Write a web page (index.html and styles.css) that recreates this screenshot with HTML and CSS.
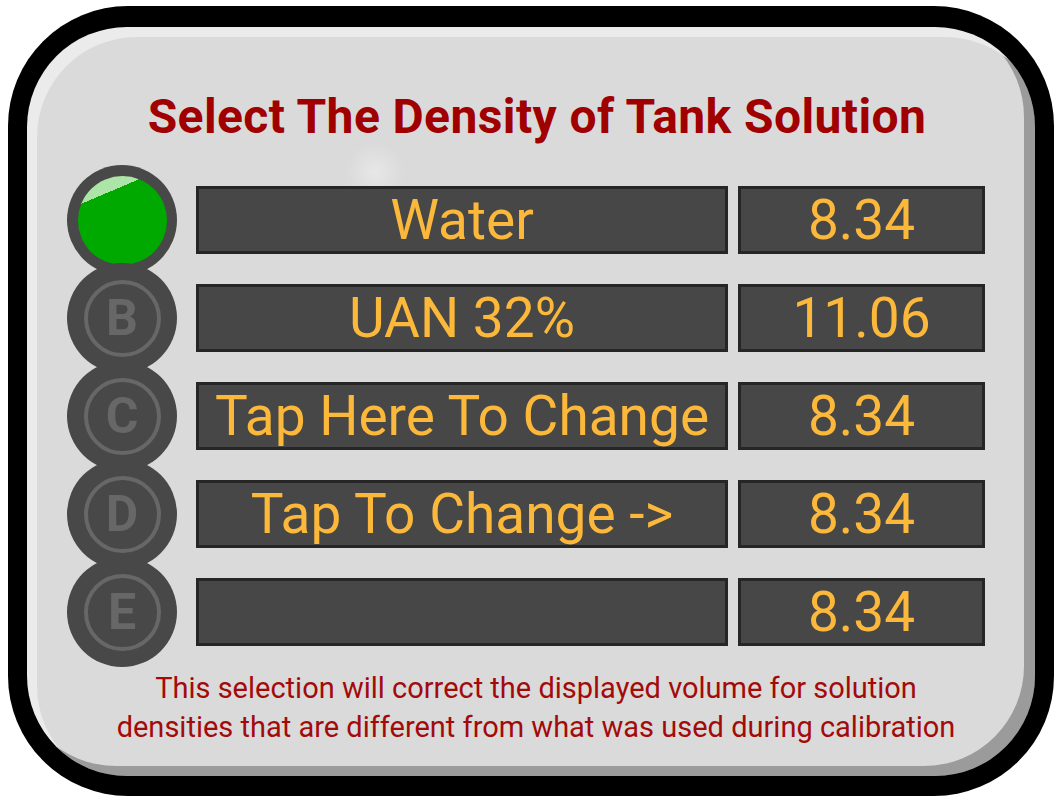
FILE: index.html
```html
<!DOCTYPE html>
<html>
<head>
<meta charset="utf-8">
<link rel="stylesheet" href="styles.css">
</head>
<body>
<div class="frame">
  <div class="panel">
    <h1 class="title">Select The Density of Tank Solution</h1>
    <div class="rows">
      <div class="row">
        <div class="dot"><div class="lamp"></div></div>
        <div class="box name">Water</div>
        <div class="box value">8.34</div>
      </div>
      <div class="row">
        <div class="dot"><div class="ring">B</div></div>
        <div class="box name">UAN 32%</div>
        <div class="box value">11.06</div>
      </div>
      <div class="row">
        <div class="dot"><div class="ring">C</div></div>
        <div class="box name">Tap Here To Change</div>
        <div class="box value">8.34</div>
      </div>
      <div class="row">
        <div class="dot"><div class="ring">D</div></div>
        <div class="box name">Tap To Change -&gt;</div>
        <div class="box value">8.34</div>
      </div>
      <div class="row">
        <div class="dot"><div class="ring">E</div></div>
        <div class="box name"></div>
        <div class="box value">8.34</div>
      </div>
    </div>
    <p class="note">This selection will correct the displayed volume for solution<br>densities that are different from what was used during calibration</p>
  </div>
</div>
</body>
</html>
```
FILE: styles.css
```css
* { box-sizing: border-box; }
html, body { margin: 0; padding: 0; background: #ffffff; }
body { font-family: Roboto, "Liberation Sans", sans-serif; }

.frame {
  margin: 6px 0 0 8px;
  width: 1046px;
  height: 790px;
  background: #000000;
  border-radius: 120px;
  padding: 21px 19px 20px 19px;
}

.panel {
  width: 1008px;
  height: 749px;
  border-radius: 100px;
  background: radial-gradient(circle at 348px 145px, rgba(255,255,255,0.35), rgba(255,255,255,0) 30px), #dadada;
  box-shadow: inset 10px 10px 0 0 #ebebeb, inset -11px -10px 0 0 #9b9b9b;
  padding-top: 63px;
  padding-left: 10px;
  display: flex;
  flex-direction: column;
  align-items: stretch;
}

.title {
  margin: 0;
  text-align: center;
  font-size: 48px;
  line-height: 54px;
  font-weight: 700;
  letter-spacing: 0.4px;
  color: #a00000;
  padding-left: 2px;
}

.rows {
  margin-top: 27px;
  display: flex;
  flex-direction: column;
  padding-left: 30px;
}

.row {
  height: 98px;
  display: flex;
  align-items: center;
}

.dot {
  width: 110px;
  height: 110px;
  margin: -6px 0;
  border-radius: 50%;
  background: #484848;
  display: flex;
  align-items: center;
  justify-content: center;
  flex: none;
}

.ring {
  width: 77px;
  height: 77px;
  border-radius: 50%;
  border: 4px solid #676767;
  display: flex;
  align-items: center;
  justify-content: center;
  font-size: 50px;
  font-weight: 700;
  color: #676767;
  line-height: 1;
}

.lamp {
  width: 89px;
  height: 89px;
  border-radius: 50%;
  background: linear-gradient(157deg, #ade5a9 23%, #00a900 23%);
}

.box {
  height: 68px;
  background: #474747;
  border: 3px solid #262626;
  display: flex;
  align-items: center;
  justify-content: center;
  color: #fbb83a;
  font-size: 55px;
  font-weight: 400;
  white-space: nowrap;
  flex: none;
}

.name {
  width: 532px;
  margin-left: 19px;
}

.value {
  width: 247px;
  margin-left: 10px;
}

.note {
  margin: 8px 0 0 0;
  text-align: center;
  font-size: 29px;
  line-height: 39px;
  color: #a30a0a;
}
```
